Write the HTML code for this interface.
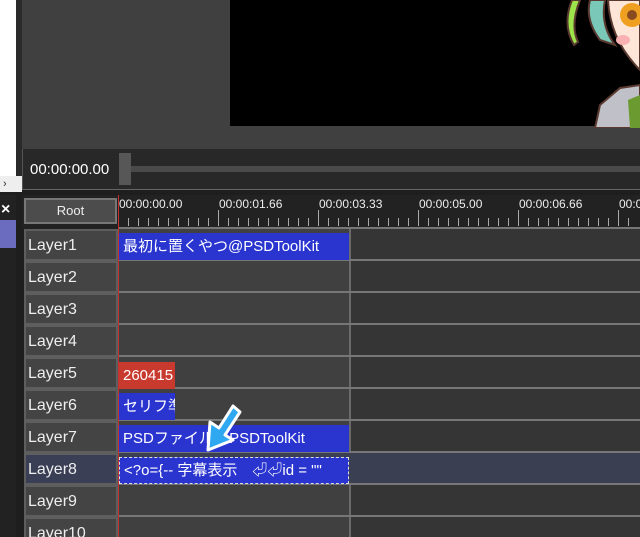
<!DOCTYPE html>
<html><head><meta charset="utf-8"><style>
*{margin:0;padding:0;box-sizing:border-box}
html,body{width:640px;height:537px;overflow:hidden}
body{background:#1e1e1e;position:relative;font-family:"Liberation Sans","Noto Sans CJK JP",sans-serif;color:#fff}
div{position:absolute}
.lab{left:24px;width:94px;height:32px;background:#444;border:2px solid #5e5e5e;font-size:16px;line-height:30px;padding-left:2px;color:#eee}
.row{left:118px;width:522px;height:32px;border-bottom:2px solid #777;background:linear-gradient(90deg,#404040 0,#404040 231px,#6a6a6a 231px,#6a6a6a 233px,#353535 233px)}
.clip{left:119px;height:27px;background:#2a35d0;font-size:15px;line-height:28px;padding-left:4px;white-space:nowrap;overflow:hidden;color:#fff}
.tl{top:197px;font-size:12px;color:#eee}
</style></head><body>
<div style="left:0;top:0;width:16px;height:176px;background:#fff"></div>
<div style="left:0;top:176px;width:22px;height:16px;background:#eee;color:#333;font-size:11px;line-height:16px;padding-left:3px">›</div>
<div style="left:16px;top:0;width:6px;height:176px;background:#2a2a2a"></div>
<div style="left:0;top:195px;width:16px;height:342px;background:#222"></div>
<div style="left:0;top:200px;width:16px;height:20px;font-size:16px;font-weight:bold;line-height:20px;padding-left:1px">×</div>
<div style="left:0;top:220px;width:16px;height:28px;background:#6b6bbf"></div>
<div style="left:22px;top:0;width:618px;height:149px;background:#404040"></div>
<div style="left:230px;top:0;width:410px;height:126px;background:#000"></div>
<svg style="position:absolute;left:560px;top:0" width="80" height="128">
<path d="M12 0 Q2 25 14 45 L18 42 Q10 25 20 0Z" fill="#9de34a" stroke="#5a3a30" stroke-width="2"/>
<path d="M30 0 Q25 20 40 40 L55 45 Q40 25 45 0Z" fill="#7ac8b8" stroke="#5a3a30" stroke-width="2"/>
<path d="M48 0 Q50 40 80 70 L80 0Z" fill="#fde6d8" stroke="#5a3a30" stroke-width="2"/>
<circle cx="72" cy="15" r="12" fill="#f0a020"/><circle cx="72" cy="15" r="5" fill="#8a4a20"/>
<ellipse cx="63" cy="40" rx="7" ry="5" fill="#f8b0b0"/>
<path d="M40 105 L60 88 L80 85 L80 128 L35 128Z" fill="#c0c0c8" stroke="#5a3a30" stroke-width="2"/>
<path d="M68 100 L80 95 L80 128 L70 128Z" fill="#6a9a30"/>
</svg>
<div style="left:22px;top:149px;width:618px;height:41px;background:#282828;border-left:1px solid #555;border-bottom:1px solid #666"></div>
<div style="left:30px;top:161px;font-size:15px;color:#fff">00:00:00.00</div>
<div style="left:131px;top:166px;width:509px;height:6px;background:#4a4a4a"></div>
<div style="left:119px;top:153px;width:12px;height:32px;background:#575757"></div>
<div style="left:22px;top:195px;width:618px;height:34px;background:#222"></div>
<div style="left:24px;top:198px;width:93px;height:26px;background:#4c4c4c;border:2px solid #777;font-size:13px;line-height:22px;text-align:center;color:#eee">Root</div>
<div style="left:118px;top:195px;width:1px;height:342px;background:#c03030;z-index:5"></div>
<div style="left:118px;top:227px;width:522px;height:2px;background:#777"></div>
<svg style="position:absolute;left:118px;top:210px" width="522" height="18">
<g stroke="#aaa" stroke-width="1">
<path d="M10.5 8V16M20.5 8V16M30.5 8V16M40.5 8V16M50.5 8V16M60.5 8V16M70.5 8V16M80.5 8V16M90.5 8V16M100.5 0V16M110.5 8V16M120.5 8V16M130.5 8V16M140.5 8V16M150.5 8V16M160.5 8V16M170.5 8V16M180.5 8V16M190.5 8V16M200.5 0V16M210.5 8V16M220.5 8V16M230.5 8V16M240.5 8V16M250.5 8V16M260.5 8V16M270.5 8V16M280.5 8V16M290.5 8V16M300.5 0V16M310.5 8V16M320.5 8V16M330.5 8V16M340.5 8V16M350.5 8V16M360.5 8V16M370.5 8V16M380.5 8V16M390.5 8V16M400.5 0V16M410.5 8V16M420.5 8V16M430.5 8V16M440.5 8V16M450.5 8V16M460.5 8V16M470.5 8V16M480.5 8V16M490.5 8V16M500.5 0V16M510.5 8V16"/>
</g></svg>
<div class="tl" style="left:119px">00:00:00.00</div>
<div class="tl" style="left:219px">00:00:01.66</div>
<div class="tl" style="left:319px">00:00:03.33</div>
<div class="tl" style="left:419px">00:00:05.00</div>
<div class="tl" style="left:519px">00:00:06.66</div>
<div class="tl" style="left:619px">00:0</div>

<div class="row" style="top:229px"></div><div class="lab" style="top:229px">Layer1</div>
<div class="row" style="top:261px"></div><div class="lab" style="top:261px">Layer2</div>
<div class="row" style="top:293px"></div><div class="lab" style="top:293px">Layer3</div>
<div class="row" style="top:325px"></div><div class="lab" style="top:325px">Layer4</div>
<div class="row" style="top:357px"></div><div class="lab" style="top:357px">Layer5</div>
<div class="row" style="top:389px"></div><div class="lab" style="top:389px">Layer6</div>
<div class="row" style="top:421px"></div><div class="lab" style="top:421px">Layer7</div>
<div class="row" style="top:453px;background:#3a3f52"></div><div class="lab" style="top:453px;background:#3a3f55">Layer8</div>
<div class="row" style="top:485px"></div><div class="lab" style="top:485px">Layer9</div>
<div class="row" style="top:517px"></div><div class="lab" style="top:517px">Layer10</div>

<div class="clip" style="top:233px;width:230px">最初に置くやつ@PSDToolKit</div>
<div class="clip" style="top:362px;width:56px;background:#c83a2e">260415</div>
<div class="clip" style="top:393px;width:56px">セリフ準</div>
<div class="clip" style="top:425px;width:230px">PSDファイル@PSDToolKit</div>
<div class="clip" style="top:457px;width:230px;border:1px dashed #ddd;line-height:25px">&lt;?o={-- 字幕表示　⏎⏎id = ""</div>
<svg style="position:absolute;left:195px;top:400px;z-index:6" width="50" height="56">
<path d="M38 6 L24 28 L15 22 L13 50 L38 40 L30 35 L45 12Z" fill="#2ea8f0" stroke="#fff" stroke-width="3" stroke-linejoin="round"/>
</svg>
</body></html>
